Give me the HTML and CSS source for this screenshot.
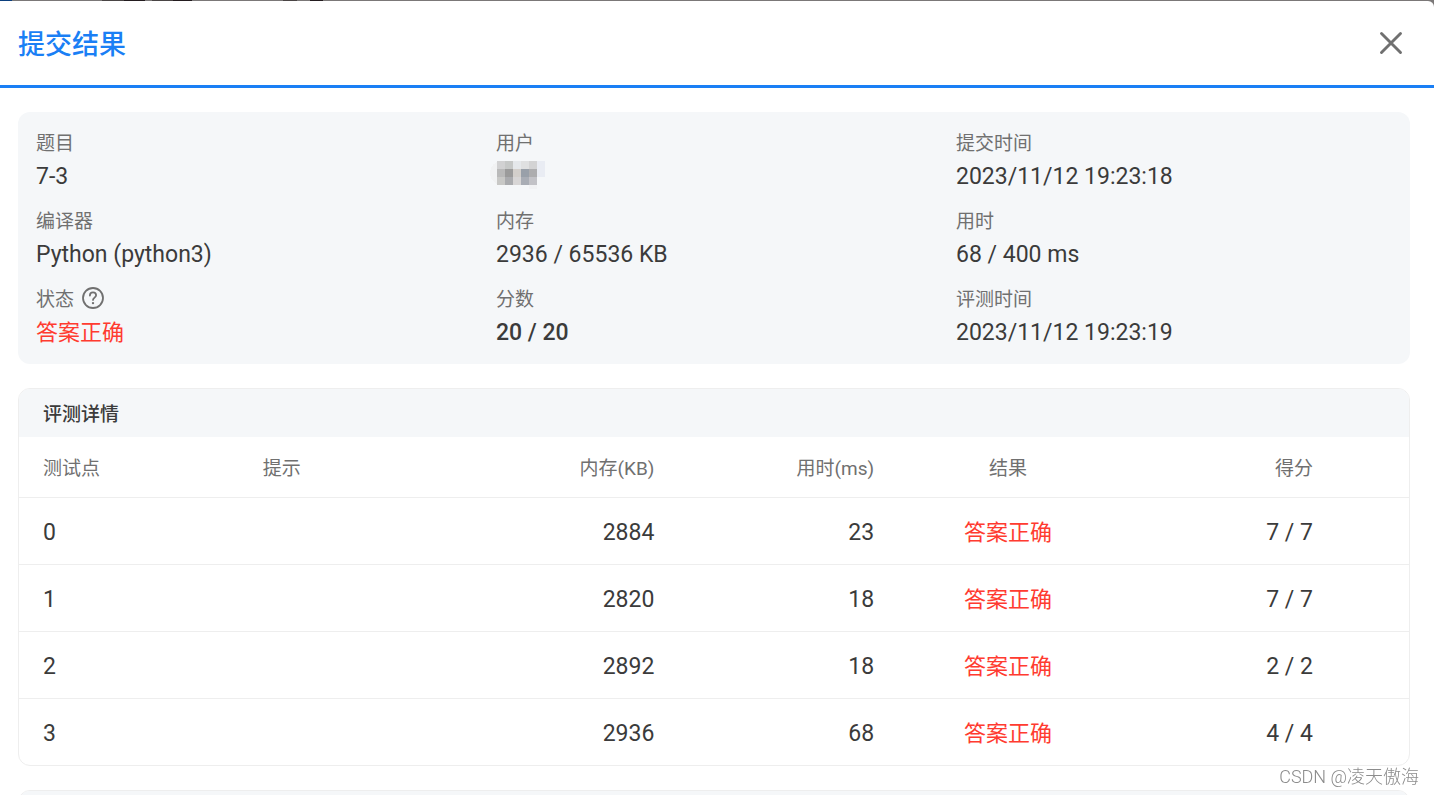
FILE: index.html
```html
<!DOCTYPE html>
<html lang="zh-CN">
<head>
<meta charset="utf-8">
<title>提交结果</title>
<link rel="stylesheet" href="styles.css">
</head>
<body>
<main class="dialog" role="dialog" aria-labelledby="dialog-title">
  <header class="dialog-header">
    <h1 class="dialog-title" id="dialog-title">提交结果</h1>
    <button class="close" type="button" aria-label="关闭">
      <svg width="24" height="24" viewBox="0 0 24 24" fill="none" stroke="currentColor" stroke-width="2.9" stroke-linecap="round"><path d="M2.5 2.5l19 19M21.5 2.5l-19 19"/></svg>
    </button>
  </header>
  <div class="dialog-body">
    <dl class="summary">
      <div><dt>题目</dt><dd>7-3</dd></div>
      <div><dt>用户</dt><dd>
        <svg class="mosaic" role="img" aria-label="用户" width="56" height="30" viewBox="-7 -2 56 30" shape-rendering="crispEdges">
          <circle cx="5" cy="12" r="12" fill="#f1f2f3"/><rect x="32" y="24" width="8" height="4" fill="#f1f2f4"/>
          <path fill="#d1d1d2" d="M0 0h8v8H0z"/><path fill="#c6c8c7" d="M8 0h8v8H8z"/><path fill="#e5e8eb" d="M16 0h8v8h-8z"/><path fill="#dfe0e1" d="M24 0h8v8h-8z"/><path fill="#d3d3d4" d="M32 0h8v8h-8z"/><path fill="#e9ecf3" d="M40 0h8v16h-8z"/>
          <path fill="#b9b9b9" d="M0 8h8v8H0z"/><path fill="#9b9b9b" d="M8 8h8v8H8z"/><path fill="#d3cfcb" d="M16 8h8v8h-8z"/><path fill="#99a0a9" d="M24 8h8v8h-8z"/><path fill="#adadaf" d="M32 8h8v8h-8z"/>
          <path fill="#c8c8c6" d="M0 16h8v8H0z"/><path fill="#aaabae" d="M8 16h8v8H8z"/><path fill="#d8d6d6" d="M16 16h8v8h-8z"/><path fill="#a9adb5" d="M24 16h8v8h-8z"/><path fill="#c2c2c7" d="M32 16h8v8h-8z"/>
        </svg></dd></div>
      <div><dt>提交时间</dt><dd>2023/11/12 19:23:18</dd></div>
      <div><dt>编译器</dt><dd>Python (python3)</dd></div>
      <div><dt>内存</dt><dd>2936 / 65536 KB</dd></div>
      <div><dt>用时</dt><dd>68 / 400 ms</dd></div>
      <div><dt>状态
        <svg class="help" width="22" height="22" viewBox="0 0 22 22" fill="none" stroke="currentColor" stroke-width="1.8" stroke-linecap="round"><circle cx="11" cy="11" r="10"/><path d="M7.9 8.6c0-1.9 1.3-3.2 3.1-3.2s3.1 1.2 3.1 2.9c0 2.1-3.1 2.5-3.1 4.6"/><circle cx="11" cy="16.1" r="1.2" fill="currentColor" stroke="none"/></svg></dt><dd class="verdict">答案正确</dd></div>
      <div><dt>分数</dt><dd class="strong">20 / 20</dd></div>
      <div><dt>评测时间</dt><dd>2023/11/12 19:23:19</dd></div>
    </dl>
    <section class="card">
      <h2 class="card-title">评测详情</h2>
      <table class="cases">
        <thead>
          <tr><th>测试点</th><th>提示</th><th class="num">内存(KB)</th><th class="num">用时(ms)</th><th class="mid">结果</th><th class="score">得分</th></tr>
        </thead>
        <tbody>
          <tr><td>0</td><td></td><td class="num">2884</td><td class="num">23</td><td class="mid verdict">答案正确</td><td class="score">7 / 7</td></tr>
          <tr><td>1</td><td></td><td class="num">2820</td><td class="num">18</td><td class="mid verdict">答案正确</td><td class="score">7 / 7</td></tr>
          <tr><td>2</td><td></td><td class="num">2892</td><td class="num">18</td><td class="mid verdict">答案正确</td><td class="score">2 / 2</td></tr>
          <tr><td>3</td><td></td><td class="num">2936</td><td class="num">68</td><td class="mid verdict">答案正确</td><td class="score">4 / 4</td></tr>
        </tbody>
      </table>
    </section>
    <section class="card"><div class="card-title"></div></section>
  </div>
</main>
<div class="watermark">CSDN @凌天傲海</div>
</body>
</html>
```
FILE: styles.css
```css
* { box-sizing: border-box; }

body {
  margin: 0;
  padding-top: 1px;
  height: 100vh;
  overflow: hidden;
  color: #3b3b3b;
  font: 23px/36px Roboto, "Noto Sans CJK SC", sans-serif;
  background: linear-gradient(90deg, #0b3f7d 12px, #7b7878 12px 102px, #4a4545 102px 124px, #231c1f 124px 145px, #7b7878 145px 152px, #4a4545 152px 173px, #231c1f 173px 192px, #7b7878 192px 283px, #4a4545 283px 297px, #7b7878 297px 310px, #231c1f 310px 323px, #7b7878 323px);
}

.dialog {
  height: 100%;
  overflow-x: hidden;
  overflow-y: auto;
  scrollbar-width: none;
  background: #fff;
  border-top-right-radius: 6px;
}

.dialog-header {
  display: flex;
  align-items: center;
  justify-content: space-between;
  height: 87px;
  padding: 0 31px 0 18px;
  border-bottom: 3px solid #1a7ff5;
}

.dialog-title {
  margin: 0;
  padding-top: 4px;
  color: #1a7ff5;
  font-size: 27px;
  line-height: 40px;
  font-weight: 500;
}

.close {
  display: flex;
  padding: 0;
  border: 0;
  background: none;
  color: #707070;
}

.dialog-body {
  display: flex;
  flex-direction: column;
  gap: 24px;
  padding: 24px 24px 24px 18px;
}

.summary {
  display: grid;
  grid-template-columns: repeat(3, 1fr);
  gap: 12px 24px;
  margin: 0;
  padding: 17px 18px 13px;
  border-radius: 12px;
  background: #f5f7f9;
}

.summary dt {
  display: flex;
  align-items: center;
  gap: 8px;
  height: 30px;
  color: #707070;
  font-size: 19px;
  line-height: 30px;
}

.summary dd {
  height: 36px;
  margin: 0;
}

.help { margin-bottom: 4px; }

.mosaic {
  display: block;
  margin-left: -6px;
}

.strong { font-weight: 500; }

.summary .verdict, .cases .verdict {
  color: #ff3b30;
  font-size: 22px;
}

.card {
  flex: none;
  overflow: hidden;
  border: 1px solid #eee;
  border-radius: 12px;
}

.card-title {
  min-height: 48px;
  margin: 0;
  padding: 4px 24px 0;
  background: #f5f7f9;
  font-size: 19px;
  line-height: 44px;
  font-weight: 500;
}

.cases {
  width: 100%;
  table-layout: fixed;
  border-spacing: 0;
}

.cases th, .cases td {
  padding: 4px 24px 0;
  text-align: left;
  font-weight: 400;
}

.cases th {
  height: 60px;
  color: #707070;
  font-size: 19px;
}

.cases td {
  height: 67px;
  border-top: 1px solid #eee;
}

.cases .num { text-align: right; }
.cases .mid { text-align: center; }

.cases .score {
  width: 291px;
  padding-right: 96px;
  text-align: right;
}

.watermark {
  position: fixed;
  right: 15px;
  bottom: 4px;
  color: #8c8c8c;
  font-size: 18px;
  line-height: 28px;
  font-weight: 300;
}
```
